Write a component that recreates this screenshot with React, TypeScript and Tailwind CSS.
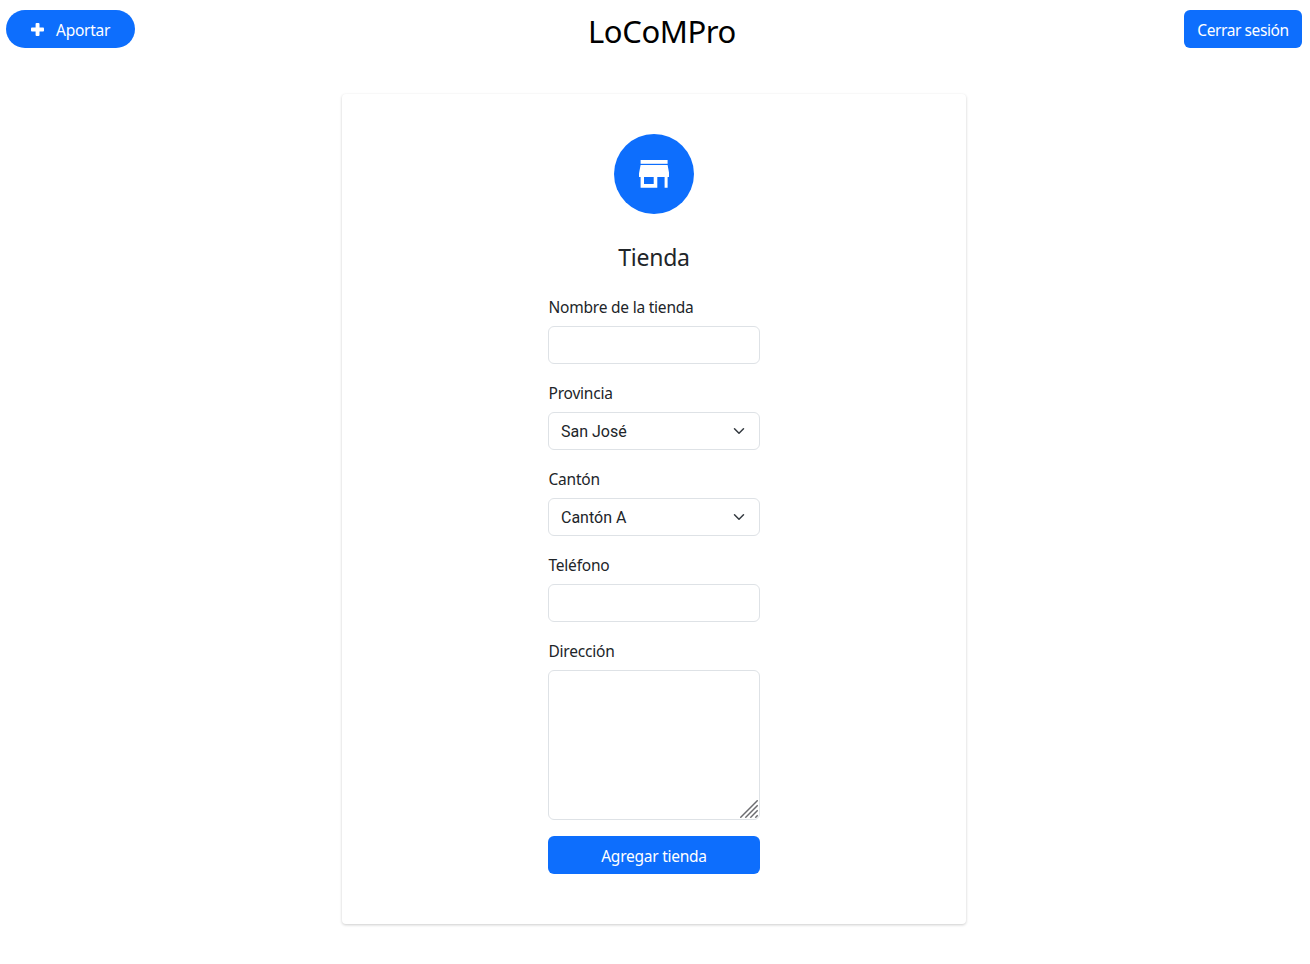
import type { ReactNode } from 'react';

const control =
  'block w-full rounded-md border border-[#dee2e6] bg-white px-3 text-[#212529] outline-none focus:border-[#86b7fe]';

function Field({ label, id, children }: { label: string; id: string; children: ReactNode }) {
  return (
    <div className="mb-4">
      <label
        htmlFor={id}
        className="mb-2 block h-6 pl-[0.5px] text-[15.5px] leading-[27px] tracking-[-0.22px] whitespace-nowrap text-[#212529]"
      >
        {label}
      </label>
      {children}
    </div>
  );
}

function Select({ id, options }: { id: string; options: string[] }) {
  return (
    <div className="relative">
      <select
        id={id}
        className={`${control} h-[38px] appearance-none pt-0.5 font-[Roboto,sans-serif] text-base leading-6`}
      >
        {options.map((option) => (
          <option key={option}>{option}</option>
        ))}
      </select>
      <svg
        viewBox="0 0 16 16"
        className="pointer-events-none absolute top-[13px] right-[15px] size-3"
        fill="none"
        stroke="#343a40"
        strokeWidth="2"
        strokeLinecap="round"
        strokeLinejoin="round"
      >
        <path d="m2 5 6 6 6-6" />
      </svg>
    </div>
  );
}

export default function App() {
  return (
    <div className="min-h-[964px] bg-white font-['Noto_Sans',sans-serif] text-[#212529]">
      <header className="flex h-[94px] items-start justify-between pt-2.5 pr-2 pl-1.5">
        <div className="flex flex-1">
          <button className="flex h-[38px] w-[129px] items-center rounded-full bg-[#0d6efd] pl-[25px] text-white">
            <svg viewBox="0 0 13 13" className="size-[13px]" fill="currentColor">
              <rect x="4.6" y="0" width="3.9" height="13" rx="0.9" />
              <rect x="0" y="4.6" width="13" height="3.9" rx="0.9" />
            </svg>
            <span className="ml-3 pt-0.5 text-[15.5px] leading-6 tracking-[-0.25px]">Aportar</span>
          </button>
        </div>
        <h1 className="pl-[16px] text-[31px] leading-[43px] tracking-[-0.4px] text-black">LoCoMPro</h1>
        <div className="flex flex-1 justify-end">
          <button className="h-[38px] w-[118px] rounded-md bg-[#0d6efd] pt-0.5 text-[15.5px] leading-6 tracking-[-0.4px] whitespace-nowrap text-white">
            Cerrar sesión
          </button>
        </div>
      </header>

      <main className="mr-[344px] ml-[342px] flex h-[830px] flex-col items-center rounded bg-white pt-10 shadow-[0_1px_3px_rgba(0,0,0,0.2)]">
        <div className="flex size-20 items-center justify-center rounded-full bg-[#0d6efd] text-white">
          <svg viewBox="0 0 30 28" className="h-7 w-[30px]" fill="currentColor">
            <path d="M1.6 0h27v3.8h-27z" />
            <path
              fillRule="evenodd"
              d="M1.6 5h27l1.6 8.6V17h-1.6v10.7H25.6V17H18.3v10.7H1.6V17H0v-3.4zM5 17v7h9.7v-7z"
            />
          </svg>
        </div>
        <h2 className="mt-7 text-[23px] leading-[30px] tracking-[-0.25px]">Tienda</h2>
        <form className="mt-[22px] w-[212px]">
          <Field label="Nombre de la tienda" id="nombre">
            <input id="nombre" className={`${control} h-[38px]`} />
          </Field>
          <Field label="Provincia" id="provincia">
            <Select id="provincia" options={['San José']} />
          </Field>
          <Field label="Cantón" id="canton">
            <Select id="canton" options={['Cantón A']} />
          </Field>
          <Field label="Teléfono" id="telefono">
            <input id="telefono" className={`${control} h-[38px]`} />
          </Field>
          <Field label="Dirección" id="direccion">
            <div className="relative">
              <textarea id="direccion" className={`${control} h-[150px] resize-none`} />
              <svg
                viewBox="0 0 18 18"
                className="pointer-events-none absolute right-0.5 bottom-0.5 size-[18px]"
                fill="none"
                stroke="#6c6c70"
                strokeWidth="1.45"
              >
                <path d="M0.3 17.7 17.7 0.3M5.3 17.7 17.7 5.3M10.3 17.7 17.7 10.3M15.3 17.7 17.7 15.3" />
              </svg>
            </div>
          </Field>
          <button
            type="button"
            className="h-[38px] w-full rounded-md bg-[#0d6efd] pt-0.5 text-[15.5px] leading-6 tracking-[-0.25px] text-white"
          >
            Agregar tienda
          </button>
        </form>
      </main>
    </div>
  );
}
